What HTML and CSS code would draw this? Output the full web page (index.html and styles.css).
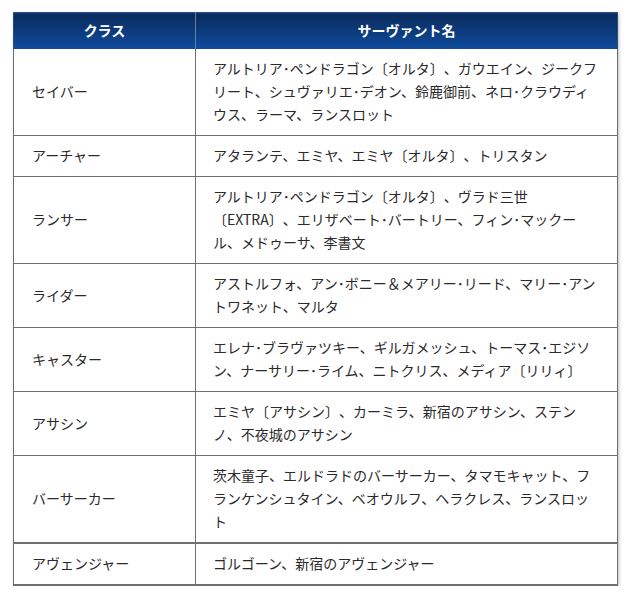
FILE: index.html
```html
<!DOCTYPE html>
<html lang="ja">
<head>
<meta charset="utf-8">
<link rel="stylesheet" href="styles.css">
</head>
<body>
<div class="wrap">
<table class="servants">
<thead>
<tr><th class="c1">クラス</th><th class="c2">サーヴァント名</th></tr>
</thead>
<tbody>
<tr><td class="cls">セイバー</td><td class="names">アルトリア･ペンドラゴン〔オルタ〕、ガウエイン、ジークフリート、シュヴァリエ･デオン、鈴鹿御前、ネロ･クラウディウス、ラーマ、ランスロット</td></tr>
<tr><td class="cls">アーチャー</td><td class="names">アタランテ、エミヤ、エミヤ〔オルタ〕、トリスタン</td></tr>
<tr><td class="cls">ランサー</td><td class="names">アルトリア･ペンドラゴン〔オルタ〕、ヴラド三世〔EXTRA〕、エリザベート･バートリー、フィン･マックール、メドゥーサ、李書文</td></tr>
<tr><td class="cls">ライダー</td><td class="names">アストルフォ、アン･ボニー＆メアリー･リード、マリー･アントワネット、マルタ</td></tr>
<tr><td class="cls">キャスター</td><td class="names">エレナ･ブラヴァツキー、ギルガメッシュ、トーマス･エジソン、ナーサリー･ライム、ニトクリス、メディア〔リリィ〕</td></tr>
<tr><td class="cls">アサシン</td><td class="names">エミヤ〔アサシン〕、カーミラ、新宿のアサシン、ステンノ、不夜城のアサシン</td></tr>
<tr><td class="cls">バーサーカー</td><td class="names">茨木童子、エルドラドのバーサーカー、タマモキャット、フランケンシュタイン、ベオウルフ、ヘラクレス、ランスロット</td></tr>
<tr class="last"><td class="cls">アヴェンジャー</td><td class="names">ゴルゴーン、新宿のアヴェンジャー</td></tr>
</tbody>
</table>
</div>
</body>
</html>
```

FILE: styles.css
```css
html, body {
  margin: 0;
  padding: 0;
  background: #ffffff;
}
.wrap {
  padding: 12px 12px 0 13px;
}
.servants {
  width: 605px;
  border-collapse: collapse;
  font-family: "Noto Sans CJK JP", "Noto Sans", sans-serif;
  font-size: 14px;
  line-height: 23px;
  color: #2a2a2a;
  text-spacing-trim: space-all;
  box-shadow: 1px 2px 3px rgba(0, 0, 0, 0.25);
  border-bottom: 2px solid #6f6f6f;
}
.servants th {
  background: linear-gradient(#0a2a5c, #0f4c9e);
  color: #ffffff;
  font-weight: bold;
  text-align: center;
  padding: 6px 0 7px;
  border-top: 1px solid #2c4a7a;
}
.servants th.c1 {
  width: 181px;
  border-left: 1px solid #2c4a7a;
  border-right: 1px solid #6c7f9e;
}
.servants th.c2 {
  border-right: 1px solid #2c4a7a;
}
.servants td {
  border: 1px solid #6f6f6f;
  padding: 8px 18px 9px 17px;
  vertical-align: middle;
}
.servants td.cls {
  padding-left: 18px;
}
.servants td.names {
  padding-right: 16px;
}
.servants tr.last td {
  border-top: 2px solid #6f6f6f;
}
.servants tbody tr:first-child td {
  border-top: none;
}
```
